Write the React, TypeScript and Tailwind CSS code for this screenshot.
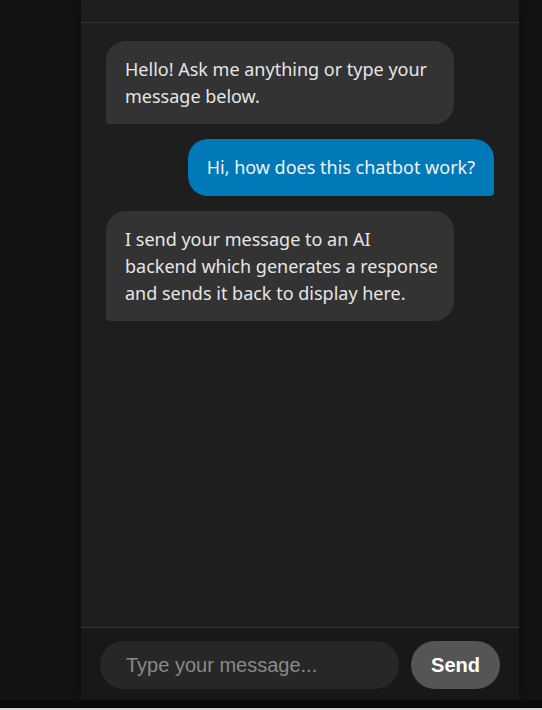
import React from 'react';

type Msg = { from: 'bot' | 'user'; text: string };

const messages: Msg[] = [
  { from: 'bot', text: 'Hello! Ask me anything or type your message below.' },
  { from: 'user', text: 'Hi, how does this chatbot work?' },
  {
    from: 'bot',
    text: 'I send your message to an AI backend which generates a response and sends it back to display here.',
  },
];

const Bubble: React.FC<{ msg: Msg }> = ({ msg }) => {
  if (msg.from === 'user') {
    return (
      <div className="flex justify-end">
        <div className="max-w-[348px] rounded-[20px] rounded-br-[4px] bg-[#0079b9] px-[19px] py-[15px] text-[18px] leading-[27px] text-[#f2f2f2]">
          {msg.text}
        </div>
      </div>
    );
  }
  return (
    <div className="flex justify-start">
      <div className="w-[348px] rounded-[20px] rounded-bl-[4px] bg-[#333333] pl-[19px] pr-[16px] pt-[15px] pb-[14px] text-[18px] leading-[27px] text-[#e6e6e6]">
        {msg.text}
      </div>
    </div>
  );
};

export default function App() {
  return (
    <div className="flex h-[710px] flex-col overflow-hidden bg-[#131313]">
      <div className="flex min-h-0 flex-1 pl-[81px]">
        <div className="flex w-[438px] flex-col bg-[#1e1e1e] shadow-[0_0_18px_rgba(0,0,0,0.55)] [font-family:'Noto_Sans','Open_Sans',sans-serif]">
          <div className="h-[23px] border-b border-[#343434]" />
          <div className="flex flex-1 flex-col gap-[15px] px-[25px] pt-[18px]">
            {messages.map((m, i) => (
              <Bubble key={i} msg={m} />
            ))}
          </div>
          <div className="flex items-center gap-[12px] border-t border-[#333333] bg-[#181818] px-[19px] pt-[13px] pb-[11px]">
            <input
              placeholder="Type your message..."
              className="h-[48px] w-[299px] rounded-full bg-[#272727] px-[26px] text-[20px] text-[#e0e0e0] outline-none placeholder:text-[#8a8a8a] [font-family:'Liberation_Sans',Arial,sans-serif]"
            />
            <button className="h-[48px] w-[89px] rounded-full bg-[#555555] text-[20px] font-bold text-white [font-family:'Liberation_Sans',Arial,sans-serif]">
              Send
            </button>
          </div>
        </div>
      </div>
      <div className="h-[8px] bg-[#0a0a0a]" />
      <div className="h-[2px] bg-[#d9d9d9]" />
    </div>
  );
}
